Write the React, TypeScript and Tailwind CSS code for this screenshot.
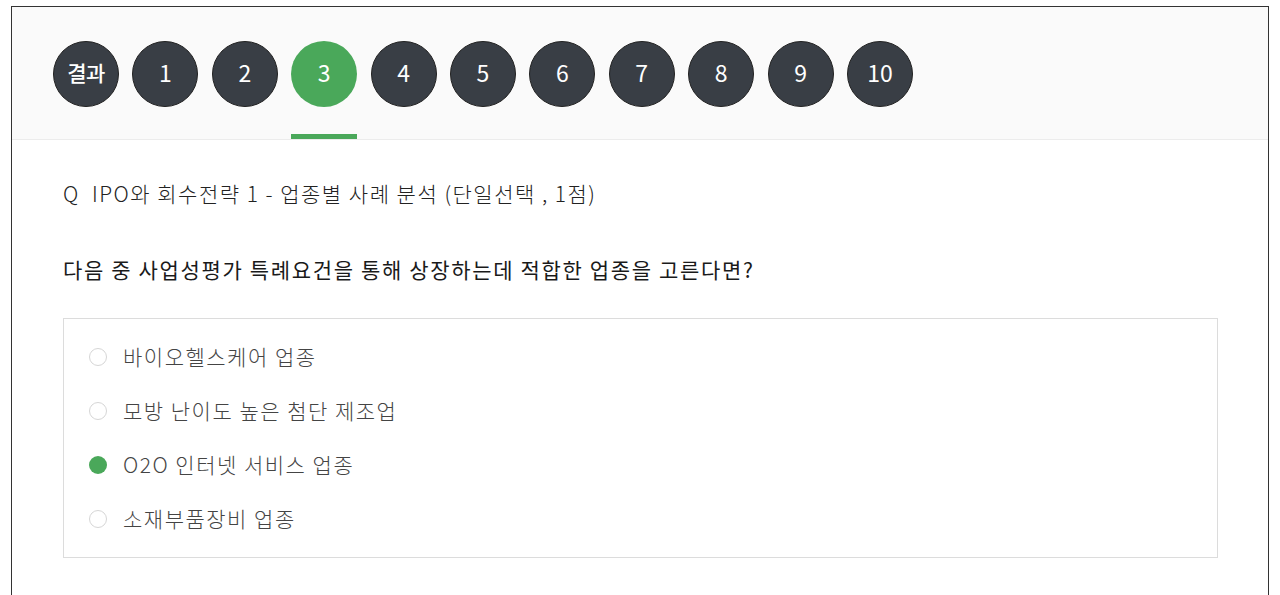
const tabs = ['결과', '1', '2', '3', '4', '5', '6', '7', '8', '9', '10'];
const options = ['바이오헬스케어 업종', '모방 난이도 높은 첨단 제조업', 'O2O 인터넷 서비스 업종', '소재부품장비 업종'];

export default function App() {
  const current = '3';
  const selected = 2;

  return (
    <div className="min-h-screen bg-white pt-[6px] pl-[11px]" style={{ fontFamily: '"Noto Sans CJK KR", "Noto Sans", sans-serif' }}>
      <div className="w-[1258px] h-[600px] border border-[#333] bg-white">
        {/* 문항 탭 */}
        <div className="flex gap-[13.4px] pl-[41px] bg-[#fafafa] border-b border-[#ececec]">
          {tabs.map((t) => {
            const active = t === current;
            return (
              <div key={t} className="flex flex-col items-center pt-[34px]">
                <div
                  className={`w-[66px] h-[66px] rounded-full flex items-center justify-center pb-[3px] text-white ${
                    active ? 'bg-[#4aa85a]' : 'bg-[#393e45] border border-[#222]'
                  } ${t === '결과' ? 'text-[21px] font-medium tracking-[-0.5px]' : 'text-[23px] font-normal'}`}
                >
                  {t}
                </div>
                <div className={`mt-[27px] w-[66px] h-[5px] ${active ? 'bg-[#4aa85a]' : 'bg-transparent'}`} />
              </div>
            );
          })}
        </div>

        {/* 문항 본문 */}
        <div className="pl-[51px] pr-[51px]">
          <p className="mt-[38px] text-[21px] leading-[30px] tracking-[1.5px] font-light text-[#222]">
            Q&nbsp;&nbsp;IPO와 회수전략 1 - 업종별 사례 분석 (단일선택 , 1점)
          </p>
          <p className="mt-[46px] text-[21px] leading-[30px] tracking-[1.65px] text-[#1a1a1a]">
            다음 중 사업성평가 특례요건을 통해 상장하는데 적합한 업종을 고른다면?
          </p>
          <div className="mt-[34px] w-[1155px] border border-[#dcdcdc] py-[11px] pl-[25px]">
            {options.map((o, i) => (
              <div key={o} className="h-[54px] flex items-center gap-[16px]">
                <span
                  className={`w-[18px] h-[18px] rounded-full ${
                    i === selected ? 'bg-[#4aa85a]' : 'border border-[#d6d6d6] bg-white'
                  }`}
                />
                <span className="text-[21px] tracking-[1.5px] font-light text-[#444]">{o}</span>
              </div>
            ))}
          </div>
        </div>
      </div>
    </div>
  );
}
